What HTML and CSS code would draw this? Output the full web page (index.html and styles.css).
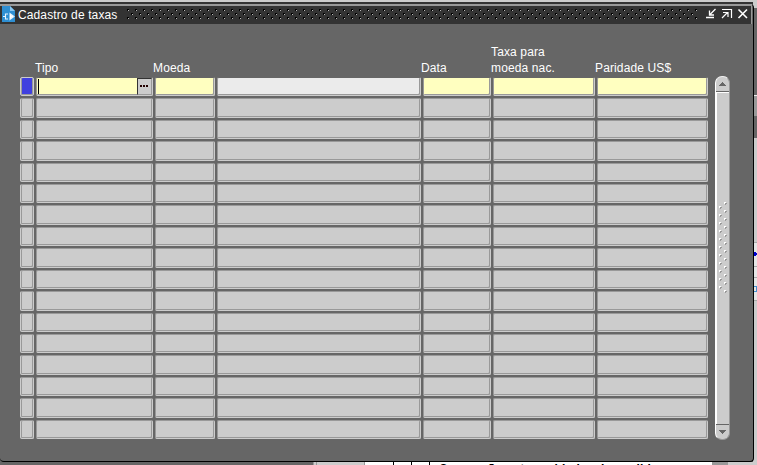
FILE: index.html
```html
<!DOCTYPE html>
<html lang="pt-BR">
<head>
<meta charset="utf-8">
<title>Cadastro de taxas</title>
<link rel="stylesheet" href="styles.css">
</head>
<body>
<div class="desktop">
  <div class="top-strip"></div>
  <div class="side-strip"><svg width="4" height="465" shape-rendering="crispEdges"><path d="M0 0h4v8h-4z" fill="#ccc"/><path d="M0 8h4v87h-4zM0 117h4v21h-4z" fill="#666"/><path d="M0 95h4v21h-4z" fill="#999"/><path d="M0 95h4v1h-4z" fill="#eee"/><path d="M0 138h4v104h-4zM0 300h4v165h-4z" fill="#ccc"/><path d="M0 242h4v58h-4z" fill="#e6e6e6"/><path d="M0 242h4v1h-4zM0 266h4v1h-4zM0 277h4v1h-4zM0 300h4v1h-4z" fill="#aaa"/><path d="M1 253h3v2h-3zM1 252h2v4h-2z" fill="#0000d0"/><path d="M1 286h2v5h-2" fill="none" stroke="#4590d0"/></svg></div>
  <div class="bottom-strip"><span class="strip-left"></span><span class="strip-gap"></span><span class="strip-cell"></span><span class="strip-white"><i></i><i></i><i></i><b>Conversão entre unidades de medida</b></span><span class="strip-thumb"></span></div>
</div>
<main class="window">
  <header class="titlebar">
    <svg class="app-icon" width="15" height="17" viewBox="0 0 15 17"><path d="M1 0h8l5 5v11H1z" fill="#2e8fd3"/><path d="M9 0v5h5z" fill="#8bc7ef"/><path d="M10 0l4 4V0z" fill="#333"/><path d="M7 8H4.500v5H7M2 10.500h3M9 7.500v6l4-3z" fill="none" stroke="#e8f5ff" stroke-width="1.100"/><path d="M9 8v5l3.500-2.500z" fill="#fff"/></svg>
    <h1>Cadastro de taxas</h1>
    <svg class="grip" height="12" shape-rendering="crispEdges"><defs><pattern id="dots" width="8" height="8" patternUnits="userSpaceOnUse"><path d="M1 0h2v1h-1v1h-1zM5 4h2v1h-1v1h-1z" fill="#000"/><path d="M2 1h1v1h-1zM6 5h1v1h-1z" fill="#bbb"/></pattern></defs><rect width="100%" height="12" fill="url(#dots)"/></svg>
    <svg class="controls" width="44" height="12" viewBox="0 0 44 12"><path d="M1 9.500h8M10.500 1L5 6.500M4.500 2.500v4.500H9" stroke="#fff" stroke-width="1.300" fill="none"/><path d="M17 1.500h9.500V10M17 10l5.500-5.500M18 4.500h5V9" stroke="#fff" stroke-width="1.200" fill="none"/><path d="M33.500 1.500l8.500 8.500M42 1.500l-8.500 8.500" stroke="#fff" stroke-width="1.600"/></svg>
  </header>
  <section class="form">
    <div class="table">
      <div class="headings"><span></span><span>Tipo</span><span>Moeda</span><span></span><span>Data</span><span>Taxa para<br>moeda nac.</span><span>Paridade US$</span></div>
      <div class="rows">
        <div class="row current"><i class="selector"></i><div class="lookup"><i class="caret"></i><button aria-label="Lista"><svg width="9" height="2" shape-rendering="crispEdges"><path d="M0 0h2v2h-2zM3 0h2v2h-2zM6 0h2v2h-2z" fill="#200"/></svg></button></div><i></i><i class="readonly"></i><i></i><i></i><i></i></div>
        <div class="row"><i></i><i></i><i></i><i></i><i></i><i></i><i></i></div>
        <div class="row"><i></i><i></i><i></i><i></i><i></i><i></i><i></i></div>
        <div class="row"><i></i><i></i><i></i><i></i><i></i><i></i><i></i></div>
        <div class="row"><i></i><i></i><i></i><i></i><i></i><i></i><i></i></div>
        <div class="row"><i></i><i></i><i></i><i></i><i></i><i></i><i></i></div>
        <div class="row"><i></i><i></i><i></i><i></i><i></i><i></i><i></i></div>
        <div class="row"><i></i><i></i><i></i><i></i><i></i><i></i><i></i></div>
        <div class="row"><i></i><i></i><i></i><i></i><i></i><i></i><i></i></div>
        <div class="row"><i></i><i></i><i></i><i></i><i></i><i></i><i></i></div>
        <div class="row"><i></i><i></i><i></i><i></i><i></i><i></i><i></i></div>
        <div class="row"><i></i><i></i><i></i><i></i><i></i><i></i><i></i></div>
        <div class="row"><i></i><i></i><i></i><i></i><i></i><i></i><i></i></div>
        <div class="row"><i></i><i></i><i></i><i></i><i></i><i></i><i></i></div>
        <div class="row"><i></i><i></i><i></i><i></i><i></i><i></i><i></i></div>
        <div class="row"><i></i><i></i><i></i><i></i><i></i><i></i><i></i></div>
        <div class="row"><i></i><i></i><i></i><i></i><i></i><i></i><i></i></div>
      </div>
    </div>
    <div class="scrollbar">
      <svg width="15" height="14" shape-rendering="crispEdges"><path d="M7 5h1v1h1v1h1v1h1v1h-7v-1h1v-1h1v-1h1z" fill="#666"/></svg>
      <div class="thumb"><svg width="11" height="92" shape-rendering="crispEdges"><defs><pattern id="bumps" width="11" height="8" patternUnits="userSpaceOnUse"><path d="M6 1h2v1h-1v1h-1zM1 5h2v1h-1v1h-1z" fill="#fff"/><path d="M7 2h2v1h-1v1h-1zM2 6h2v1h-1v1h-1z" fill="#999"/></pattern></defs><rect width="11" height="92" fill="url(#bumps)"/></svg></div>
      <svg width="15" height="14" shape-rendering="crispEdges"><path d="M4 5h7v1h-1v1h-1v1h-1v1h-1v-1h-1v-1h-1v-1h-1z" fill="#666"/></svg>
    </div>
  </section>
</main>
</body>
</html>
```
FILE: styles.css
```css
* { box-sizing: border-box; }
body {
  margin: 0;
  width: 757px;
  height: 465px;
  overflow: hidden;
  position: relative;
  background: #666;
  font: 12px/16px "Liberation Sans", Arial, sans-serif;
}
.desktop {
  display: grid;
  grid-template: 4px 458px 3px / 753px 4px;
}
.top-strip { background: #ccc; border-bottom: 2px solid #333; }
.side-strip { grid-column: 2; grid-row: 1 / 4; }
.side-strip svg { display: block; }
.bottom-strip { grid-row: 3; grid-column: 1; display: flex; overflow: hidden; background: #ccc; }
.strip-left { width: 313px; background: #666; }
.strip-gap { width: 4px; background: #ccc; border-left: 1px solid #999; border-right: 1px solid #999; }
.strip-cell { width: 48px; background: #ccc; border-right: 1px solid #999; }
.strip-white { width: 347px; background: #fff; display: flex; padding-left: 28px; }
.strip-white i { width: 18px; flex: none; border-left: 1px solid #000; }
.strip-white b { margin-left: -8px; white-space: nowrap; line-height: 15px; letter-spacing: .16px; }
.strip-thumb { width: 16px; background: #999; }
.window {
  position: absolute;
  left: 0;
  top: 4px;
  width: 754px;
  height: 458px;
  background: #666;
  border-right: 1px solid #000;
  border-bottom: 1px solid #000;
  border-radius: 0 4px 4px 4px;
}
.titlebar {
  display: flex;
  height: 20px;
  margin-right: 1px;
  background: #333;
  border-top: 2px solid #999;
  border-right: 1px solid #999;
}
.app-icon { margin-left: 1px; }
h1 {
  width: 110px;
  margin: 0 0 0 2px;
  color: #fff;
  font-size: 12px;
  font-weight: normal;
  line-height: 18px;
  letter-spacing: .12px;
  white-space: nowrap;
}
.grip { width: 572px; margin: 3px 0 0 -2px; }
.controls { margin: 2px 0 0 7px; }
.form { display: flex; gap: 7px; padding-left: 20px; }
.table { width: 688px; }
.headings, .row {
  display: grid;
  grid-template-columns: 14px 117px 61px 205px 69px 103px 112px;
  column-gap: 1px;
}
.headings {
  height: 53px;
  align-items: end;
  color: #fff;
  padding-bottom: 1px;
}
.headings span { white-space: nowrap; letter-spacing: .13px; }
.rows {
  height: 363px;
  display: grid;
  grid-template-rows: repeat(17, 1fr);
  row-gap: 1px;
}
.row > * {
  min-width: 0;
  margin: 0 -1px 1px 1px;
  background: #ccc;
  border: 1px solid #999;
  border-right-color: #ccc;
  border-bottom-color: #ccc;
  border-radius: 2px;
  box-shadow: inset -1px -1px #999;
}
.row > * + * { margin-left: 2px; }
.row > :first-child { margin-left: 0; margin-right: 0; border-left-color: #ccc; box-shadow: inset 1px 0 #999, inset -1px -1px #999; }
.row > :nth-child(2) { margin-left: 1px; }
.current > i, .current .lookup { background: #ffffc0; border-top-color: #666; }
.current .selector { background: #4040df; border-top-color: #ccc; }
.current .readonly { background: #ebebeb; }
.lookup { display: flex; justify-content: space-between; padding: 1px 0 1px 1px; }
.caret { width: 1px; background: #000; height: 15px; }
.lookup button {
  width: 15px;
  padding: 0 0 0 2px;
  margin: -1px 0 -1px;
  display: flex;
  align-items: center;
  background: #ccc;
  border: 1px solid #999;
  border-left-color: #333;
  border-top-color: #333;
}
.lookup button svg { margin-top: -2px; }
.scrollbar {
  width: 15px;
  height: 364px;
  margin-top: 52px;
  display: flex;
  flex-direction: column;
  background: #ccc;
  border: 1px solid #999;
  border-left-color: #fff;
  border-top-color: #eee;
  border-radius: 7px;
}
.scrollbar > svg { margin-left: -1px; flex: none; }
.thumb {
  flex: 1;
  display: flex;
  align-items: center;
  padding: 0 0 22px 2px;
  border-top: 1px solid #666;
  border-bottom: 1px solid #666;
  box-shadow: inset 1px 1px #fff;
}
```
